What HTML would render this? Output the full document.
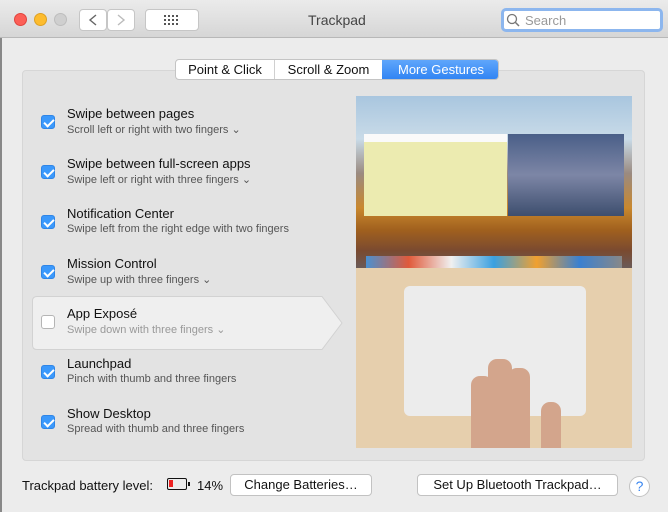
<!DOCTYPE html><html><head><style>
*{margin:0;padding:0;box-sizing:border-box}
body{width:668px;height:512px;overflow:hidden;background:#ececec;font-family:"Liberation Sans",sans-serif;position:relative}
.abs{position:absolute}
.tb{left:0;top:0;width:668px;height:38px;background:linear-gradient(#ebebeb,#d6d6d6);border-bottom:1px solid #b8b8b8}
.dot{width:13px;height:13px;border-radius:50%;top:13px}
.btn{background:#fff;border:1px solid #c6c6c6;border-radius:4px}
.panel{left:22px;top:70px;width:623px;height:391px;background:#e3e3e3;border:1px solid #d6d6d6;border-radius:4px}
.row{left:41px;width:300px}
.cb{position:absolute;left:0;top:9px;width:14px;height:14px;border-radius:3px;background:#3b99fc;border:1px solid #2f85e6}
.cb:after{content:"";position:absolute;left:4px;top:1px;width:4px;height:8px;border:solid #fff;border-width:0 2px 2px 0;transform:rotate(45deg)}
.cb.off{background:#fff;border-color:#b5b5b5}
.cb.off:after{display:none}
.t{position:absolute;left:26px;top:0;font-size:13px;color:#111;white-space:nowrap}
.s{position:absolute;left:26px;top:17px;font-size:11px;color:#555;white-space:nowrap}
.bb{background:#fff;border:1px solid #c2c2c2;border-radius:4px;font-size:13px;color:#111;text-align:center;line-height:20px;height:22px}
.f{position:absolute;background:#d3a58c;border-radius:9px 9px 0 0}
</style></head><body>
<div class="abs" style="left:0;top:0;width:2px;height:512px;background:#888"></div>
<div class="abs tb"></div>
<div class="abs dot" style="left:14px;background:#fc5f57;border:1px solid #e0443e"></div>
<div class="abs dot" style="left:34px;background:#fdbc2e;border:1px solid #dea123"></div>
<div class="abs dot" style="left:54px;background:#cfcfcf;border:1px solid #bdbdbd"></div>
<div class="abs btn" style="left:79px;top:9px;width:28px;height:22px"></div>
<div class="abs btn" style="left:107px;top:9px;width:28px;height:22px"></div>
<svg class="abs" style="left:79px;top:9px" width="56" height="22"><path d="M17 6 L11 11 L17 16" stroke="#666" stroke-width="1.4" fill="none"/><path d="M39 6 L45 11 L39 16" stroke="#bbb" stroke-width="1.4" fill="none"/></svg>
<div class="abs btn" style="left:145px;top:9px;width:54px;height:22px"></div>
<svg class="abs" style="left:163px;top:14px" width="18" height="12"><g fill="#555"><rect x="1" y="1" width="2" height="2"/><rect x="5" y="1" width="2" height="2"/><rect x="9" y="1" width="2" height="2"/><rect x="13" y="1" width="2" height="2"/><rect x="1" y="5" width="2" height="2"/><rect x="5" y="5" width="2" height="2"/><rect x="9" y="5" width="2" height="2"/><rect x="13" y="5" width="2" height="2"/><rect x="1" y="9" width="2" height="2"/><rect x="5" y="9" width="2" height="2"/><rect x="9" y="9" width="2" height="2"/><rect x="13" y="9" width="2" height="2"/></g></svg>
<div class="abs" style="left:308px;top:12px;font-size:14px;color:#444">Trackpad</div>
<div class="abs" style="left:501px;top:8px;width:162px;height:24px;border:3px solid #8cb6ee;border-radius:5px;background:#fff"></div>
<svg class="abs" style="left:506px;top:13px" width="14" height="14"><circle cx="6" cy="6" r="4.5" stroke="#777" stroke-width="1.3" fill="none"/><path d="M9.5 9.5 L13 13" stroke="#777" stroke-width="1.5"/></svg>
<div class="abs" style="left:525px;top:13px;font-size:13px;color:#999">Search</div>
<div class="abs panel"></div>
<div class="abs" style="left:175px;top:59px;width:324px;height:21px;background:#fff;border:1px solid #c4c4c4;border-radius:4px;overflow:hidden;font-size:13px;line-height:19px">
<span class="abs" style="left:0;width:98px;text-align:center;color:#111">Point &amp; Click</span>
<span class="abs" style="left:98px;width:1px;height:20px;background:#d0d0d0"></span>
<span class="abs" style="left:99px;width:107px;text-align:center;color:#111">Scroll &amp; Zoom</span>
<span class="abs" style="left:206px;width:118px;height:20px;background:linear-gradient(#5fa6fb,#2f83f3);color:#fff;text-align:center">More Gestures</span>
</div>
<svg class="abs" style="left:32px;top:296px" width="312" height="54"><path d="M5 .5 H290 L310 27 L290 53.5 H5 Q.5 53.5 .5 49 V5 Q.5 .5 5 .5Z" fill="#efefef" stroke="#d2d2d2"/></svg>
<div class="abs row" style="top:106px"><div class="cb"></div><div class="t">Swipe between pages</div><div class="s">Scroll left or right with two fingers ⌄</div></div>
<div class="abs row" style="top:156px"><div class="cb"></div><div class="t">Swipe between full-screen apps</div><div class="s">Swipe left or right with three fingers ⌄</div></div>
<div class="abs row" style="top:206px"><div class="cb"></div><div class="t">Notification Center</div><div class="s">Swipe left from the right edge with two fingers</div></div>
<div class="abs row" style="top:256px"><div class="cb"></div><div class="t">Mission Control</div><div class="s">Swipe up with three fingers ⌄</div></div>
<div class="abs row" style="top:306px"><div class="cb off"></div><div class="t">App Exposé</div><div class="s" style="color:#999">Swipe down with three fingers ⌄</div></div>
<div class="abs row" style="top:356px"><div class="cb"></div><div class="t">Launchpad</div><div class="s">Pinch with thumb and three fingers</div></div>
<div class="abs row" style="top:406px"><div class="cb"></div><div class="t">Show Desktop</div><div class="s">Spread with thumb and three fingers</div></div>
<div class="abs" style="left:356px;top:96px;width:276px;height:352px;background:#e6cfad;overflow:hidden">
<div class="abs" style="left:0;top:0;width:276px;height:172px;background:linear-gradient(#a9c6df 0%,#c9dbe8 25%,#9a8a80 45%,#c9882e 65%,#a0601e 78%,#7a4a30 90%,#6a5a58 100%)"></div>
<div class="abs" style="left:8px;top:38px;width:143px;height:82px;background:#ecebb0;border-top:8px solid #fafafa"></div>
<div class="abs" style="left:152px;top:38px;width:116px;height:82px;background:linear-gradient(#4a5f88,#7d86a6 50%,#3d4e6e)"></div>
<div class="abs" style="left:10px;top:160px;width:256px;height:12px;background:linear-gradient(90deg,#4a90d0,#e05a3a,#f0f0f0,#3aa0e0,#f0a030,#3a80d0,#888)"></div>
<div class="abs" style="left:48px;top:190px;width:182px;height:130px;background:#ececec;border-radius:6px"></div>
<div class="f" style="left:115px;top:280px;width:22px;height:72px"></div>
<div class="f" style="left:132px;top:263px;width:24px;height:89px"></div>
<div class="f" style="left:152px;top:272px;width:22px;height:80px"></div>
<div class="f" style="left:185px;top:306px;width:20px;height:46px"></div>
</div>
<div class="abs" style="left:22px;top:478px;font-size:13px;color:#111">Trackpad battery level:</div>
<div class="abs" style="left:167px;top:478px;width:20px;height:12px;border:1.5px solid #111;border-radius:2px"><div style="margin:1px;width:4px;height:7px;background:#e22"></div></div>
<div class="abs" style="left:188px;top:482px;width:2px;height:4px;background:#111"></div>
<div class="abs" style="left:197px;top:478px;font-size:13px;color:#111">14%</div>
<div class="abs bb" style="left:230px;top:474px;width:142px">Change Batteries…</div>
<div class="abs bb" style="left:417px;top:474px;width:201px">Set Up Bluetooth Trackpad…</div>
<div class="abs" style="left:629px;top:476px;width:21px;height:21px;border-radius:50%;background:#fff;border:1px solid #c2c2c2;color:#3a86f0;font-size:14px;text-align:center;line-height:19px">?</div>
</body></html>
